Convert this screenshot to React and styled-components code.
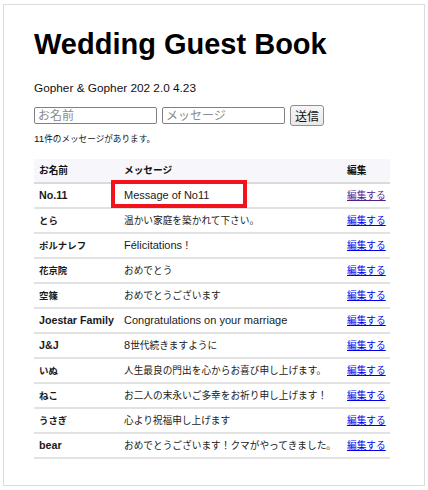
import React from 'react';
import styled, { createGlobalStyle } from 'styled-components';

const GlobalStyle = createGlobalStyle`
  html, body {
    margin: 0;
    padding: 0;
    background: #fff;
  }
  body {
    font-family: "Liberation Sans", "Noto Sans CJK JP", sans-serif;
    color: #111;
  }
`;

const Frame = styled.div`
  margin: 4px 3px 0 3px;
  height: 482px;
  box-sizing: border-box;
  border: 1px solid #dcdcdc;
  padding: 0 30px;
`;

const Title = styled.h1`
  margin: 22px 0 0 0;
  font-size: 29px;
  line-height: 34px;
  font-weight: 700;
  color: #000;
`;

const Subtitle = styled.p`
  margin: 20px 0 0 0;
  font-size: 11.8px;
  line-height: 14px;
  color: #111;
`;

const Form = styled.form`
  margin-top: 10px;
  display: flex;
  align-items: center;
  gap: 5px;
  height: 21px;
`;

const TextInput = styled.input`
  width: 123px;
  height: 17px;
  box-sizing: border-box;
  border: 1px solid #808080;
  border-radius: 2px;
  padding: 0 3px;
  font-family: "Liberation Sans", "Noto Sans CJK JP", sans-serif;
  font-size: 12px;
  color: #111;
  background: #fff;

  &::placeholder {
    color: #8a8a8a;
  }
`;

const SubmitButton = styled.button`
  width: 34px;
  height: 21px;
  box-sizing: border-box;
  padding: 0;
  border: 1px solid #8f8f8f;
  border-radius: 3px;
  background: linear-gradient(#f6f6f6, #e9e9e9);
  font-family: "Liberation Sans", "Noto Sans CJK JP", sans-serif;
  font-size: 12px;
  color: #111;
`;

const Count = styled.p`
  margin: 7px 0 0 0;
  font-size: 9.8px;
  line-height: 12px;
  color: #111;
`;

// CJK glyphs render narrower than the Latin text beside them
const Jp = styled.span`
  font-size: 0.88em;
`;

const Table = styled.table`
  margin-top: 14px;
  width: 356px;
  border-collapse: separate;
  border-spacing: 0;
  table-layout: fixed;
  font-size: 11px;
`;

const HeadCell = styled.th`
  width: ${p => p.$w}px;
  padding: 0 0 0 5px;
  line-height: 23px;
  text-align: left;
  font-weight: 700;
  background: #f7f7fb;
  border-bottom: 2px solid #dadada;
  color: #111;
`;

const Cell = styled.td`
  position: relative;
  padding: 0 0 0 5px;
  line-height: 23px;
  white-space: nowrap;
  border-bottom: 2px solid #e2e2e2;
  font-weight: ${p => (p.$bold ? 700 : 400)};
  font-size: ${p => (p.$bold ? '10.7px' : '11px')};
  color: #1a1a1a;
`;

const Highlight = styled.span`
  position: absolute;
  left: -8px;
  top: -4px;
  width: 136px;
  height: 28px;
  box-sizing: border-box;
  border: 4px solid #f2121b;
  pointer-events: none;
`;

const EditLink = styled.a`
  color: ${p => (p.$visited ? '#551a8b' : '#0000ee')};
  text-decoration: underline;
`;

const cjk = /([\u3000-\u30ff\u4e00-\u9fff\uff00-\uffef]+)/;

const Mixed = ({ text }) =>
  text.split(cjk).map((part, i) =>
    i % 2 ? <Jp key={i}>{part}</Jp> : part
  );

const entries = [
  { name: 'No.11', message: 'Message of No11', marked: true, visited: true },
  { name: 'とら', message: '温かい家庭を築かれて下さい。' },
  { name: 'ポルナレフ', message: 'Félicitations !' },
  { name: '花京院', message: 'おめでとう' },
  { name: '空篠', message: 'おめでとうございます' },
  { name: 'Joestar Family', message: 'Congratulations on your marriage' },
  { name: 'J&J', message: '8世代続きますように' },
  { name: 'いぬ', message: '人生最良の門出を心からお喜び申し上げます。' },
  { name: 'ねこ', message: 'お二人の末永いご多幸をお祈り申し上げます！' },
  { name: 'うさぎ', message: '心より祝福申し上げます' },
  { name: 'bear', message: 'おめでとうございます！クマがやってきました。' },
];

const App = () => (
  <>
    <GlobalStyle />
    <Frame>
      <Title>Wedding Guest Book</Title>
      <Subtitle>Gopher &amp; Gopher 202 2.0 4.23</Subtitle>
      <Form onSubmit={e => e.preventDefault()}>
        <TextInput placeholder="お名前" />
        <TextInput placeholder="メッセージ" />
        <SubmitButton type="submit">送信</SubmitButton>
      </Form>
      <Count><Mixed text="11件のメッセージがあります。" /></Count>
      <Table>
        <thead>
          <tr>
            <HeadCell $w={80}><Mixed text="お名前" /></HeadCell>
            <HeadCell $w={218}><Mixed text="メッセージ" /></HeadCell>
            <HeadCell $w={43}><Mixed text="編集" /></HeadCell>
          </tr>
        </thead>
        <tbody>
          {entries.map(entry => (
            <tr key={entry.name}>
              <Cell $bold><Mixed text={entry.name} /></Cell>
              <Cell>
                <Mixed text={entry.message} />
                {entry.marked && <Highlight />}
              </Cell>
              <Cell>
                <EditLink href="#" $visited={entry.visited}>
                  <Mixed text="編集する" />
                </EditLink>
              </Cell>
            </tr>
          ))}
        </tbody>
      </Table>
    </Frame>
  </>
);

export default App;
